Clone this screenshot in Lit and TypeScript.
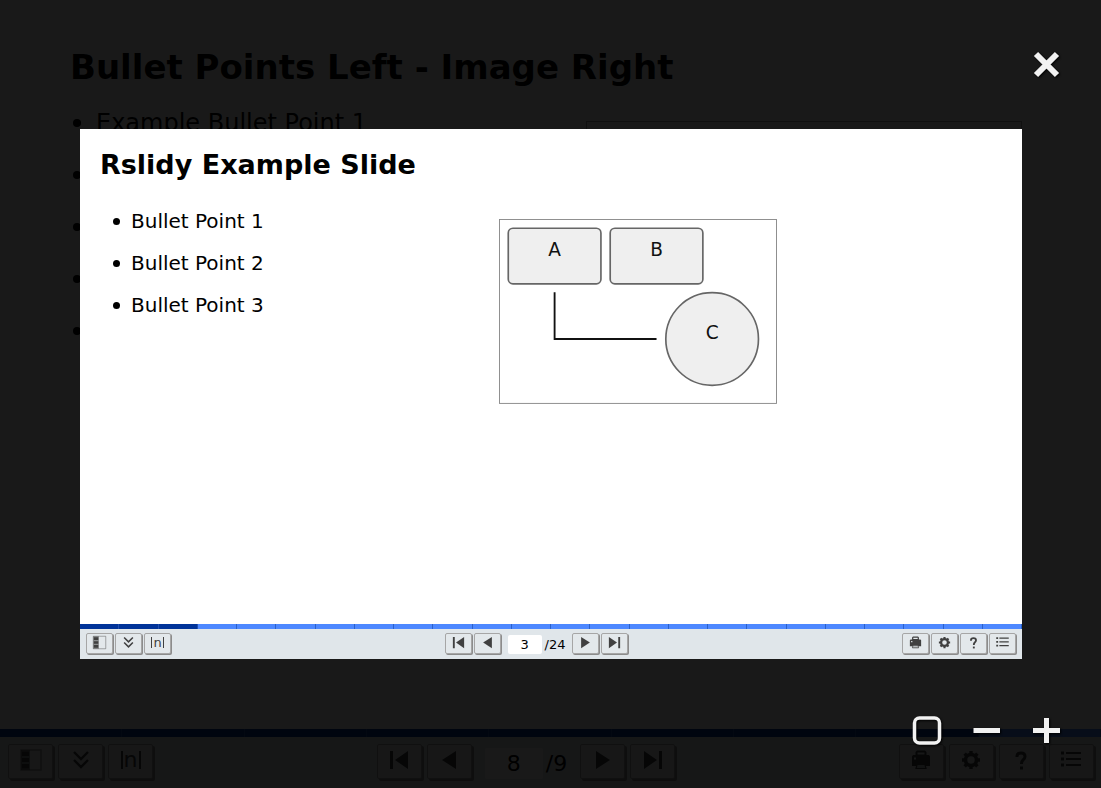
import { LitElement, html, svg, css } from "lit";
import { customElement, property } from "lit/decorators.js";
import { classMap } from "lit/directives/class-map.js";

const icons: Record<string, unknown> = {
  panel: svg`<path d="M2 2H22V22H2Z" fill="none" stroke="currentColor" stroke-opacity=".45" stroke-width="1.5"/><path d="M2 2H11V22H2Z" opacity=".55"/><path d="M3 3.500H10V8H3ZM3 10H10V14H3ZM3 16H10V20.500H3Z"/>`,
  down: svg`<path d="M5 4L12 11L19 4M5 12L12 19L19 12" fill="none" stroke="currentColor" stroke-width="2.400"/>`,
  first: svg`<path d="M3 3H6V21H3ZM21 3V21L8 12Z"/>`,
  prev: svg`<path d="M19 3V21L5 12Z"/>`,
  next: svg`<path d="M5 3V21L19 12Z"/>`,
  last: svg`<path d="M18 3H21V21H18ZM3 3V21L16 12Z"/>`,
  print: svg`<path fill-rule="evenodd" d="M8 2.500H16L17.500 4V7H20L21 8.500V18H3V8.500L4 7H6.500V4ZM8.500 4.500V6.500H15.500V4.500ZM5 9.500V11.500H7V9.500Z"/><path d="M8 16.500H16L17 20.500H7Z" fill="#b8bcbe" stroke="currentColor" stroke-width="1.200"/>`,
  gear: svg`<circle cx="12" cy="12" r="5.500" fill="none" stroke="currentColor" stroke-width="3.600"/><path d="M12 3V6M12 18V21M3 12H6M18 12H21M5.600 5.600L7.800 7.800M16.200 16.200L18.400 18.400M5.600 18.400L7.800 16.200M16.200 7.800L18.400 5.600" stroke="currentColor" stroke-width="3.400"/>`,
  help: svg`<path d="M8 9V8Q8 5 12 5Q16 5 16 8.500Q16 10.500 14 12Q12.500 13.200 12.500 16" fill="none" stroke="currentColor" stroke-width="3"/><path d="M11 18.500H14V21.500H11Z"/>`,
  list: svg`<path d="M2 3.500H5V6.500H2ZM2 9.500H5V12.500H2ZM2 15.500H5V18.500H2ZM7 4H22V6H7ZM7 10H22V12H7ZM7 16H22V18H7Z"/>`,
};

@customElement("slide-toolbar")
class SlideToolbar extends LitElement {
  @property({ type: Number }) current = 1;
  @property({ type: Number }) total = 1;

  static styles = css`
    :host {
      display: block;
      --button-width: 45px;
      --button-height: 35px;
      --button-gap: 5px;
      --button-lift: 3px;
      --icon: 24px;
      --text: 22px;
      --field-width: 58px;
      --field-height: 31px;
      --field-gap: 13px;
      --pad: 7px 7px 9px 8px;
      --progress: 8px;
      --shadow: 2px 2px 0 #8c8c8c;
      --bar: 2px;
      --glyph: 20px;
      --glyph-text: 22px;
      --glyph-height: 18px;
    }
    :host([compact]) {
      --button-width: 27px;
      --button-height: 21px;
      --button-gap: 2px;
      --button-lift: 2px;
      --icon: 15px;
      --text: 13px;
      --field-width: 34px;
      --field-height: 19px;
      --field-gap: 7px;
      --pad: 4px 6px 5px 6px;
      --progress: 5px;
      --shadow: 1px 1px 0 #8c8c8c;
      --bar: 1px;
      --glyph: 13px;
      --glyph-text: 13px;
      --glyph-height: 11px;
    }
    .progress { display: flex; height: var(--progress); background: #4d88ff; }
    .step { flex: 1; box-sizing: border-box; border-right: 1px solid #2b62c9; }
    .done { background: #003399; border-right-color: #1f4fae; }
    .bar {
      display: flex;
      justify-content: space-between;
      align-items: center;
      padding: var(--pad);
      background: #e0e6ea;
    }
    .group { display: flex; align-items: center; gap: var(--button-gap); }
    .nav { display: flex; align-items: center; gap: var(--field-gap); }
    .count {
      display: flex;
      align-items: center;
      gap: 3px;
      padding-top: 3px;
      font-size: var(--text);
      line-height: var(--field-height);
    }
    :host([compact]) .count { padding-top: 2px; }
    button {
      display: flex;
      align-items: center;
      justify-content: center;
      box-sizing: border-box;
      width: var(--button-width);
      height: var(--button-height);
      padding: 0 0 var(--button-lift);
      border: 1px solid #a6a6a6;
      border-radius: 2px;
      background: #e3e8eb;
      box-shadow: var(--shadow);
      color: #404040;
      font-family: inherit;
    }
    svg { display: block; width: var(--icon); height: var(--icon); fill: currentColor; }
    .number {
      display: flex;
      align-items: center;
      justify-content: center;
      box-sizing: border-box;
      width: var(--glyph);
      height: var(--glyph-height);
      border: solid currentColor;
      border-width: 0 var(--bar);
      font-size: var(--glyph-text);
      line-height: var(--glyph-height);
    }
    input {
      box-sizing: border-box;
      width: var(--field-width);
      height: var(--field-height);
      padding: 0;
      border: 0;
      border-radius: 2px;
      background: #fff;
      color: #000;
      font: inherit;
      text-align: center;
    }
  `;

  button(icon: string, label: string) {
    return html`<button type="button" aria-label=${label}>
      <svg viewBox="0 0 24 24" aria-hidden="true">${icons[icon]}</svg>
    </button>`;
  }

  render() {
    const steps = Array.from({ length: this.total }, (_, i) => i < this.current);
    return html`
      <div class="progress">
        ${steps.map((done) => html`<div class=${classMap({ step: true, done })}></div>`)}
      </div>
      <div class="bar">
        <div class="group">
          ${this.button("panel", "Slide overview")} ${this.button("down", "Hide toolbar")}
          <button type="button" aria-label="Slide numbers"><span class="number">n</span></button>
        </div>
        <div class="nav">
          <div class="group">
            ${this.button("first", "First slide")} ${this.button("prev", "Previous slide")}
          </div>
          <div class="count">
            <input type="text" aria-label="Slide" .value=${String(this.current)} />
            <span>/${this.total}</span>
          </div>
          <div class="group">
            ${this.button("next", "Next slide")} ${this.button("last", "Last slide")}
          </div>
        </div>
        <div class="group">
          ${this.button("print", "Print")} ${this.button("gear", "Settings")}
          ${this.button("help", "Help")} ${this.button("list", "Table of contents")}
        </div>
      </div>
    `;
  }
}

@customElement("app-root")
class AppRoot extends LitElement {
  static styles = css`
    :host {
      display: block;
      position: relative;
      min-height: 100vh;
      background: #fff;
      color: #000;
      font-family: Verdana, "DejaVu Sans", sans-serif;
    }
    h1, h2, ul { margin: 0; }
    ul { list-style: none; }
    li { display: flex; align-items: center; }
    li::before { content: ""; border-radius: 50%; background: #000; }
    .deck { display: flex; flex-direction: column; min-height: 100vh; }
    .slide { flex: 1; padding: 45px 79px 0 70px; }
    .slide h1 { font-size: 34px; line-height: 44px; }
    .columns { display: grid; grid-template-columns: 516px 1fr; margin-top: 16px; }
    .points { padding-left: 3px; font-size: 24px; line-height: 36px; }
    .points li { gap: 15px; height: 36px; margin-bottom: 16px; }
    .points li::before { width: 8px; height: 8px; }
    .frame { height: 290px; margin-top: 16px; border: 1px solid #a0a0a0; }
    .overlay {
      position: absolute;
      inset: 0;
      display: flex;
      align-items: center;
      justify-content: center;
      padding: 0 79px 0 80px;
      background: rgba(0, 0, 0, 0.9);
    }
    .preview {
      display: flex;
      flex-direction: column;
      width: 100%;
      aspect-ratio: 16 / 9;
      background: #fff;
    }
    .content { flex: 1; padding: 18px 20px 0; }
    .content h2 { font-size: 27px; line-height: 36px; }
    .split { display: grid; grid-template-columns: 399fr 503fr; margin-top: 24px; }
    .items { padding-left: 13px; font-size: 20px; line-height: 28px; }
    .items li { gap: 11px; margin-bottom: 14px; }
    .items li::before { width: 7px; height: 7px; }
    .diagram { display: block; width: 278px; margin-top: 12px; }
    .shape { fill: #efefef; stroke: #666; stroke-width: 1.8; }
    .outline { fill: #fff; stroke: #888; stroke-width: 1; }
    .link { fill: none; stroke: #111; stroke-width: 2; }
    .label { font-size: 20px; text-anchor: middle; fill: #111; }
    .close, .zoom { position: absolute; right: 38px; display: flex; }
    .close { top: 48px; }
    .zoom { bottom: 41px; gap: 28px; }
    .control {
      width: 32px;
      height: 32px;
      padding: 0;
      border: 0;
      background: none;
      color: #f2f2f2;
    }
    .control svg {
      display: block;
      width: 32px;
      height: 32px;
      fill: none;
      stroke: currentColor;
      filter: drop-shadow(1px 1px 1px #000);
    }
  `;

  render() {
    return html`
      <main class="deck">
        <section class="slide">
          <h1>Bullet Points Left - Image Right</h1>
          <div class="columns">
            <ul class="points">
              <li>Example Bullet Point 1</li>
              <li></li>
              <li></li>
              <li></li>
              <li></li>
            </ul>
            <div class="frame"></div>
          </div>
        </section>
        <slide-toolbar .current=${8} .total=${9}></slide-toolbar>
      </main>
      <div class="overlay" role="dialog" aria-label="Image viewer">
        <section class="preview">
          <div class="content">
            <h2>Rslidy Example Slide</h2>
            <div class="split">
              <ul class="items">
                ${[1, 2, 3].map((n) => html`<li>Bullet Point ${n}</li>`)}
              </ul>
              <svg class="diagram" viewBox="0 0 300 200">
                <rect class="outline" x="0.500" y="0.500" width="299" height="198.500" />
                <rect class="shape" x="10" y="10" width="100" height="60" rx="5" />
                <rect class="shape" x="120" y="10" width="100" height="60" rx="5" />
                <circle class="shape" cx="230" cy="129.500" r="50" />
                <path class="link" d="M60 79V129.500H170" />
                <text class="label" x="60" y="40">A</text>
                <text class="label" x="170" y="40">B</text>
                <text class="label" x="230" y="130">C</text>
              </svg>
            </div>
          </div>
          <slide-toolbar compact .current=${3} .total=${24}></slide-toolbar>
        </section>
        <div class="close">
          <button class="control" type="button" aria-label="Close">
            <svg viewBox="0 0 32 32"><path d="M5 6L26 27M26 6L5 27" stroke-width="6" /></svg>
          </button>
        </div>
        <div class="zoom">
          <button class="control" type="button" aria-label="Fit to screen">
            <svg viewBox="0 0 32 32"><rect x="3.500" y="3" width="25" height="25" rx="5" stroke-width="3.500" /></svg>
          </button>
          <button class="control" type="button" aria-label="Zoom out">
            <svg viewBox="0 0 32 32"><path d="M2.500 15.500H29" stroke-width="5" /></svg>
          </button>
          <button class="control" type="button" aria-label="Zoom in">
            <svg viewBox="0 0 32 32"><path d="M2 15.500H29M15.500 3V28" stroke-width="5" /></svg>
          </button>
        </div>
      </div>
    `;
  }
}
